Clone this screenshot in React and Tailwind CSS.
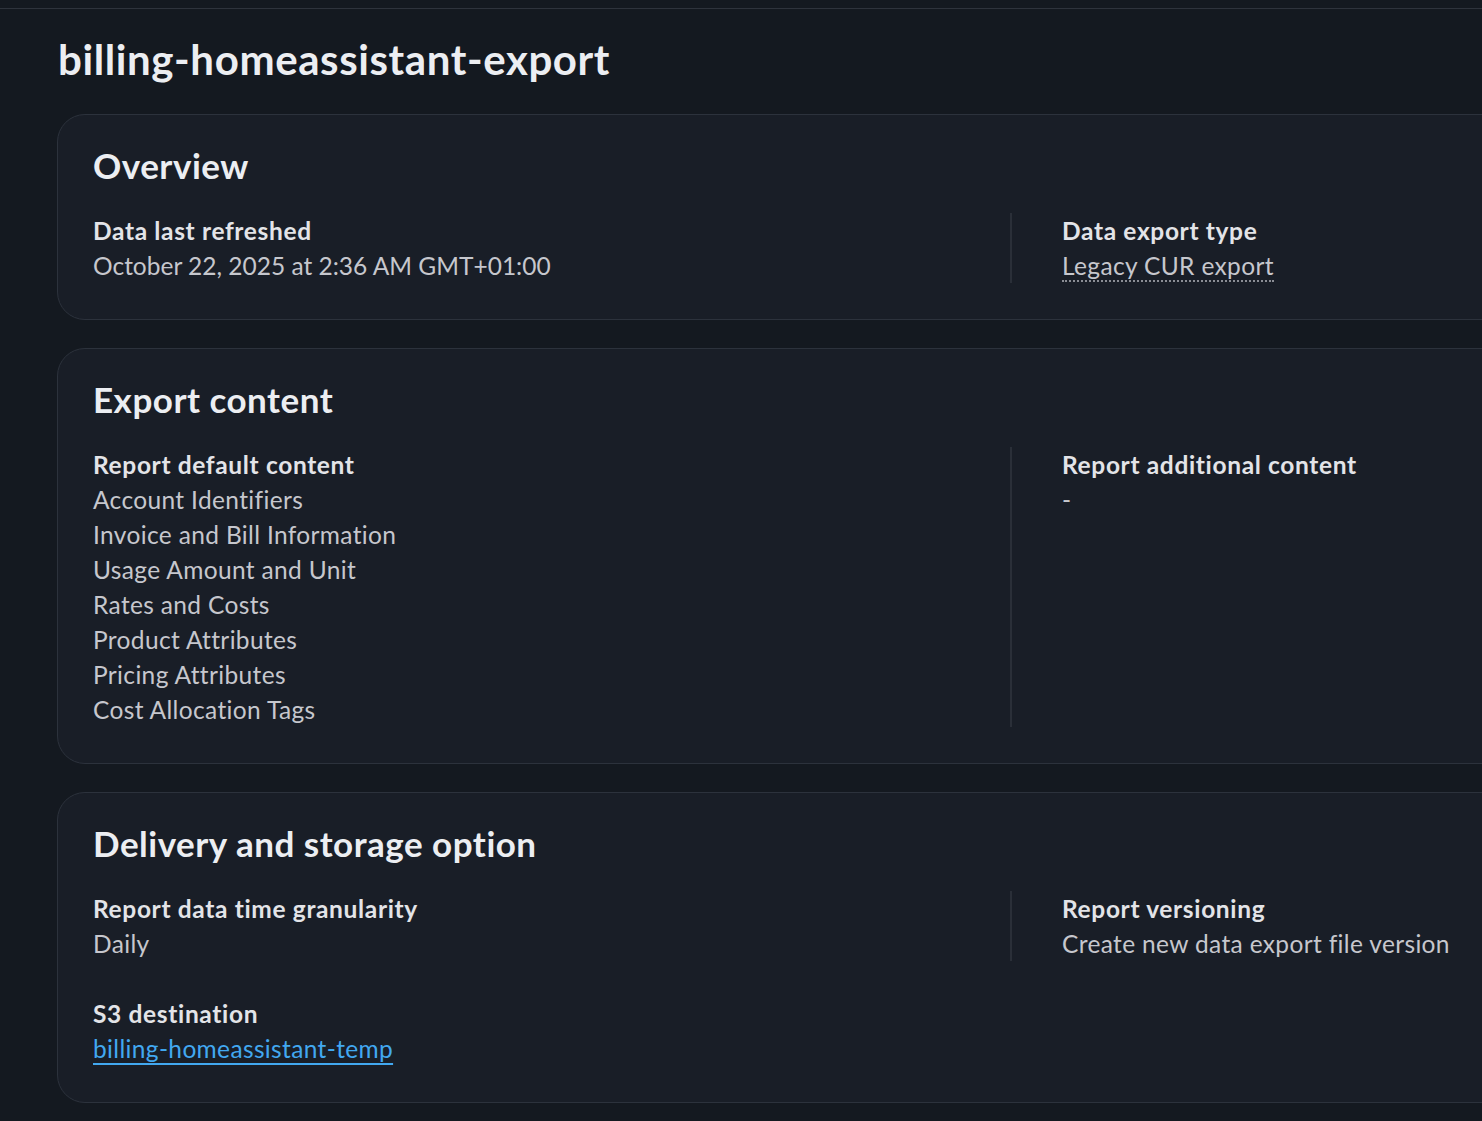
import React from "react";

const FONT = { fontFamily: '"Lato", "Noto Sans", Arial, sans-serif' };

function Label({ children }) {
  return <div className="text-[24.5px] leading-[35px] font-bold tracking-[0.65px] text-[#e3e4e8]">{children}</div>;
}
function Value({ children, className = "" }) {
  return <div className={`text-[24.5px] leading-[35px] tracking-[0.35px] text-[#c6c7cd] ${className}`}>{children}</div>;
}

function Card({ title, children }) {
  return (
    <div className="w-[1950px] rounded-[28px] border border-[#2c323c] bg-[#191e27] pl-[35px] pt-[29px] pb-[36px]">
      <h2 className="mb-[27px] text-[35px] leading-[42px] font-bold tracking-[0.5px] text-[#eceef2]">{title}</h2>
      {children}
    </div>
  );
}

function Row({ left, right }) {
  return (
    <div className="flex">
      <div className="w-[917px] shrink-0">{left}</div>
      <div className="border-l-2 border-[#2a2f38] pl-[50px]">{right}</div>
    </div>
  );
}

export default function App() {
  return (
    <div className="h-[1121px] w-[1482px] overflow-hidden bg-[#141920]" style={FONT}>
      <div className="h-[8px]" />
      <div className="h-px bg-[#2e333c]" />
      <div className="pl-[57px]">
        <h1 className="mt-[24px] mb-[29px] pl-px text-[42px] leading-[52px] font-bold tracking-[0.6px] text-[#eceef2]">
          billing-homeassistant-export
        </h1>
        <div className="flex flex-col gap-[28px]">
          <Card title="Overview">
            <Row
              left={
                <>
                  <Label>Data last refreshed</Label>
                  <Value className="tracking-[0px]">October 22, 2025 at 2:36 AM GMT+01:00</Value>
                </>
              }
              right={
                <>
                  <Label>Data export type</Label>
                  <Value>
                    <span className="border-b-2 border-dotted border-[#8a8d94]">Legacy CUR export</span>
                  </Value>
                </>
              }
            />
          </Card>
          <Card title="Export content">
            <Row
              left={
                <>
                  <Label>Report default content</Label>
                  <Value>Account Identifiers</Value>
                  <Value>Invoice and Bill Information</Value>
                  <Value>Usage Amount and Unit</Value>
                  <Value>Rates and Costs</Value>
                  <Value>Product Attributes</Value>
                  <Value>Pricing Attributes</Value>
                  <Value>Cost Allocation Tags</Value>
                </>
              }
              right={
                <>
                  <Label>Report additional content</Label>
                  <Value>-</Value>
                </>
              }
            />
          </Card>
          <Card title="Delivery and storage option">
            <Row
              left={
                <>
                  <Label>Report data time granularity</Label>
                  <Value>Daily</Value>
                </>
              }
              right={
                <>
                  <Label>Report versioning</Label>
                  <Value>Create new data export file version</Value>
                </>
              }
            />
            <div className="mt-[35px]">
              <Label>S3 destination</Label>
              <Value>
                <a href="#" className="text-[#42a8f0] underline decoration-2 underline-offset-[5px]">
                  billing-homeassistant-temp
                </a>
              </Value>
            </div>
          </Card>
        </div>
      </div>
    </div>
  );
}
